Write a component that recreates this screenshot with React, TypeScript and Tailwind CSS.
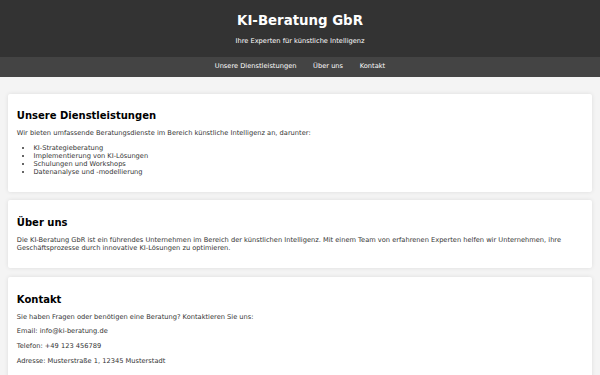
import React from "react";

const services = [
  "KI-Strategieberatung",
  "Implementierung von KI-Lösungen",
  "Schulungen und Workshops",
  "Datenanalyse und -modellierung",
];

const navLinks = ["Unsere Dienstleistungen", "Über uns", "Kontakt"];

const Card = ({ title, children }: { title: string; children: React.ReactNode }) => (
  <section className="bg-white rounded-[2px] p-[8.5px] shadow-[0_0_4px_rgba(0,0,0,0.1)]">
    <h2 className="text-[10px] leading-[11.7px] font-bold text-black my-[8.3px]">{title}</h2>
    {children}
  </section>
);

const App = () => {
  return (
    <div
      className="min-h-screen bg-[#f4f4f4] text-[#333] text-[6.67px] leading-[7.9px]"
      style={{ fontFamily: '"DejaVu Sans", Verdana, sans-serif' }}
    >
      <header className="bg-[#333] text-white text-center py-[4.5px] flex flex-col items-center">
        <h1 className="text-[13.33px] leading-[15.5px] font-bold mt-[8.9px]">KI-Beratung GbR</h1>
        <p className="mt-[8.9px] mb-[6.7px]">Ihre Experten für künstliche Intelligenz</p>
      </header>
      <nav className="bg-[#444] h-[20px] flex items-center justify-center gap-[16.67px]">
        {navLinks.map((link) => (
          <a key={link} href="#" className="text-white">
            {link}
          </a>
        ))}
      </nav>
      <main className="pt-[16.67px] pb-[8.33px] px-[8.33px] flex flex-col gap-[8.8px]">
        <Card title="Unsere Dienstleistungen">
          <p className="my-[6.67px]">
            Wir bieten umfassende Beratungsdienste im Bereich künstliche Intelligenz an, darunter:
          </p>
          <ul className="list-disc pl-[16.67px] my-[6.67px]">
            {services.map((s) => (
              <li key={s}>{s}</li>
            ))}
          </ul>
        </Card>
        <Card title="Über uns">
          <p className="my-[6.67px]">
            Die KI-Beratung GbR ist ein führendes Unternehmen im Bereich der künstlichen Intelligenz. Mit einem Team
            von erfahrenen Experten helfen wir Unternehmen, ihre Geschäftsprozesse durch innovative KI-Lösungen zu
            optimieren.
          </p>
        </Card>
        <Card title="Kontakt">
          <p className="my-[6.67px]">Sie haben Fragen oder benötigen eine Beratung? Kontaktieren Sie uns:</p>
          <p className="my-[6.67px]">Email: info@ki-beratung.de</p>
          <p className="my-[6.67px]">Telefon: +49 123 456789</p>
          <p className="my-[6.67px]">Adresse: Musterstraße 1, 12345 Musterstadt</p>
        </Card>
      </main>
    </div>
  );
};

export default App;
